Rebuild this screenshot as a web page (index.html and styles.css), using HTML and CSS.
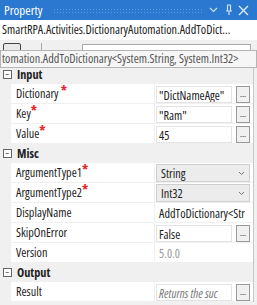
FILE: index.html
```html
<!DOCTYPE html>
<html lang="en">
  <head>
    <meta charset="UTF-8" />
    <title>Property</title>
    <link rel="stylesheet" href="styles.css">
  </head>
  <body>
    <div class="panel">
      <div class="titlebar">
        <span class="title">Property</span>
        <span class="grip"></span>
        <span class="tb-icon">
          <svg width="9" height="6" viewBox="0 0 9 6"><path d="M1 1 L4.5 4.5 L8 1" fill="none" stroke="#cfe0f5" stroke-width="1.2"/></svg>
        </span>
        <span class="tb-icon">
          <svg width="8" height="12" viewBox="0 0 8 12"><path d="M2 1 H6 M2.5 1 V7 M5.5 1 V7 M1 7 H7 M4 7 V11" fill="none" stroke="#cfe0f5" stroke-width="1.2"/></svg>
        </span>
        <span class="tb-icon">
          <svg width="11" height="11" viewBox="0 0 11 11"><path d="M1 1 L10 10 M10 1 L1 10" fill="none" stroke="#e4eefa" stroke-width="1.3"/></svg>
        </span>
      </div>

      <div class="typename">SmartRPA.Activities.DictionaryAutomation.AddToDict...</div>

      <div class="toolbar">
        <span class="tool-btn"></span>
        <span class="tool-sep"></span>
        <span class="search"></span>
        <div class="tooltip">tomation.AddToDictionary&lt;System.String, System.Int32&gt;</div>
      </div>

      <div class="grid">
        <div class="cat"><span class="toggle">−</span>Input</div>
        <div class="row">
          <div class="name">Dictionary <span class="req">*</span></div>
          <div class="val"><span class="box">"DictNameAge"</span><span class="dots">...</span></div>
        </div>
        <div class="row">
          <div class="name">Key<span class="req">*</span></div>
          <div class="val"><span class="box">"Ram"</span><span class="dots">...</span></div>
        </div>
        <div class="row">
          <div class="name">Value<span class="req">*</span></div>
          <div class="val"><span class="box">45</span><span class="dots">...</span></div>
        </div>

        <div class="cat"><span class="toggle">−</span>Misc</div>
        <div class="row">
          <div class="name">ArgumentType1<span class="req">*</span></div>
          <div class="val"><span class="select">String<svg width="7" height="5" viewBox="0 0 7 5"><path d="M1 1 L3.5 3.5 L6 1" fill="none" stroke="#777" stroke-width="1"/></svg></span></div>
        </div>
        <div class="row">
          <div class="name">ArgumentType2<span class="req">*</span></div>
          <div class="val"><span class="select">Int32<svg width="7" height="5" viewBox="0 0 7 5"><path d="M1 1 L3.5 3.5 L6 1" fill="none" stroke="#777" stroke-width="1"/></svg></span></div>
        </div>
        <div class="row">
          <div class="name">DisplayName</div>
          <div class="val"><span class="plain">AddToDictionary&lt;Str</span></div>
        </div>
        <div class="row">
          <div class="name">SkipOnError</div>
          <div class="val"><span class="box">False</span><span class="dots">...</span></div>
        </div>
        <div class="row">
          <div class="name">Version</div>
          <div class="val"><span class="plain muted">5.0.0</span></div>
        </div>

        <div class="cat"><span class="toggle">−</span>Output</div>
        <div class="row">
          <div class="name">Result</div>
          <div class="val"><span class="box hint">Returns the suc</span><span class="dots">...</span></div>
        </div>
      </div>
    </div>
  </body>
</html>
```

FILE: styles.css
```css
body {
  margin: 0;
  font-family: "Open Sans", Lato, sans-serif;
  font-stretch: condensed;
  font-size: 12.2px;
  color: #222;
  background-color: #f0f0f0;
}
.panel {
  width: 257px;
  height: 305px;
  overflow: hidden;
  background-color: #f0f0f0;
}
.titlebar {
  height: 20px;
  display: flex;
  align-items: center;
  padding: 0 6px 0 4px;
  background-color: #2a78cf;
  color: #fff;
}
.title {
  font-size: 13px;
}
.grip {
  flex: 1;
  height: 5px;
  margin: 0 4px 0 10px;
  background-image: radial-gradient(#5b98de 0.8px, transparent 0.9px);
  background-size: 3px 3px;
}
.tb-icon {
  display: flex;
  align-items: center;
  justify-content: center;
  width: 15px;
  height: 20px;
}
.typename {
  height: 20px;
  line-height: 20px;
  padding-left: 2px;
  background-color: #fff;
  white-space: nowrap;
  overflow: hidden;
}
.toolbar {
  position: relative;
  height: 25px;
  display: flex;
  align-items: flex-start;
  padding-top: 3px;
  box-sizing: border-box;
}
.tool-btn {
  width: 16px;
  height: 10px;
  margin-left: 3px;
  border: 1px solid #444;
  border-radius: 2px;
  background-color: #e8e8e8;
}
.tool-sep {
  width: 1px;
  height: 10px;
  margin-left: 20px;
  background-color: #aaa;
}
.search {
  flex: 1;
  height: 12px;
  margin: 1px 6px 0 40px;
  border: 1px solid #aaa;
  background-color: #fff;
}
.tooltip {
  position: absolute;
  left: 0;
  top: 10px;
  width: 254px;
  height: 16px;
  line-height: 16px;
  padding-left: 1px;
  border: 1px solid #b5b5b5;
  background-color: #f6f6f6;
  color: #555;
  white-space: nowrap;
  overflow: hidden;
}
.grid {
  width: 253px;
  border-right: 1px solid #c8c8c8;
}
.cat {
  height: 19px;
  display: flex;
  align-items: center;
  font-weight: bold;
}
.toggle {
  display: inline-flex;
  align-items: center;
  justify-content: center;
  width: 7px;
  height: 7px;
  margin: 0 5px 0 3px;
  border: 1px solid #666;
  font-size: 9px;
  font-weight: normal;
  line-height: 7px;
  background-color: #fff;
}
.row {
  height: 20px;
  display: grid;
  grid-template-columns: 144px 1fr;
  margin-left: 11px;
  background-color: #fff;
  border-bottom: 1px solid #f0f0f0;
  box-sizing: border-box;
}
.name {
  padding-left: 5px;
  line-height: 20px;
  border-right: 1px solid #f0f0f0;
  white-space: nowrap;
}
.req {
  color: #e8242b;
  font-weight: bold;
  font-size: 14px;
  vertical-align: 2px;
  line-height: 10px;
}
.val {
  display: flex;
  align-items: center;
  padding-left: 1px;
  overflow: hidden;
}
.box {
  width: 76px;
  height: 17px;
  line-height: 17px;
  padding-left: 2px;
  border: 1px solid #e4e4e4;
  box-sizing: border-box;
  white-space: nowrap;
  overflow: hidden;
}
.hint {
  font-style: italic;
  color: #777;
}
.dots {
  width: 14px;
  height: 17px;
  margin-left: 4px;
  border: 1px solid #999;
  box-sizing: border-box;
  font-size: 9px;
  line-height: 13px;
  text-align: center;
  background-color: #f0f0f0;
}
.select {
  width: 94px;
  height: 18px;
  display: flex;
  align-items: center;
  justify-content: space-between;
  padding: 0 4px 0 4px;
  border: 1px solid #cfcfcf;
  box-sizing: border-box;
  background-color: #ececec;
}
.plain {
  padding-left: 3px;
  white-space: nowrap;
}
.muted {
  color: #999;
}
```
